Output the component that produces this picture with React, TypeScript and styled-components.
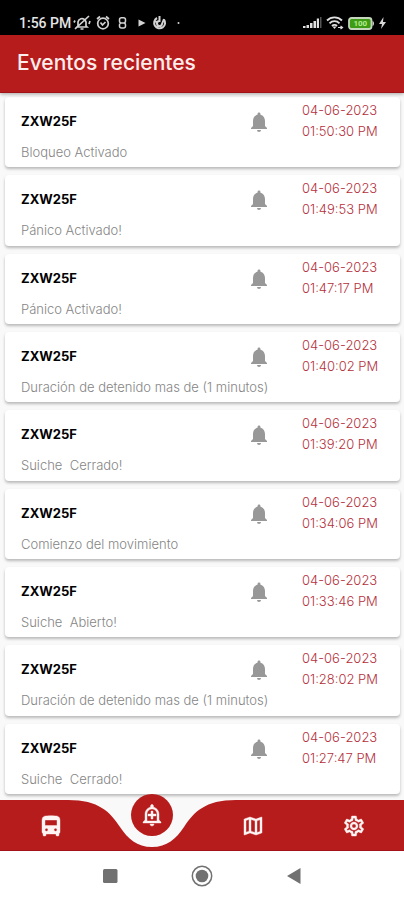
import React from "react";
import styled, { createGlobalStyle } from "styled-components";
import {
  MdNotifications,
  MdOutlineAddAlert,
  MdOutlineMap,
  MdOutlineSettings,
} from "react-icons/md";

const colors = {
  red: "#b71c1c",
  redDark: "#a31216",
  date: "#b4303c",
  page: "#f9f9f9",
  muted: "#858585",
  bell: "#989898",
  system: "#717171",
};

const GlobalStyle = createGlobalStyle`
  *, *::before, *::after { box-sizing: border-box; }
  body {
    margin: 0;
    background: ${colors.page};
    font-family: Inter, "Open Sans", sans-serif;
  }
`;

const Screen = styled.div`
  display: flex;
  flex-direction: column;
  min-height: 100vh;
`;

const StatusBar = styled.div`
  display: flex;
  align-items: center;
  justify-content: space-between;
  height: 35px;
  padding: 11px 18px 0 19px;
  background: #000;
  color: #e4e4e4;
  font: 500 14px/20px Roboto, sans-serif;
`;

const StatusGroup = styled.div<{ $gap: number }>`
  display: flex;
  align-items: center;
  gap: ${(p) => p.$gap}px;

  svg {
    display: block;
  }
`;

const Clock = styled.span`
  white-space: nowrap;
`;

const Header = styled.header`
  position: relative;
  z-index: 1;
  display: flex;
  align-items: center;
  height: 58px;
  padding: 0 17px 2px;
  background: ${colors.red};
  border-bottom: 1px solid ${colors.redDark};
  box-shadow: 0 1px 4px rgba(0, 0, 0, 0.35);
`;

const Title = styled.h1`
  margin: 0;
  color: #fdeeee;
  font-size: 21px;
  font-weight: 500;
  line-height: 30px;
`;

const EventList = styled.ul`
  display: flex;
  flex: 1;
  flex-direction: column;
  gap: 8px;
  margin: 0;
  padding: 4px 4px 6px 5px;
  list-style: none;
`;

const Card = styled.li`
  display: grid;
  flex: 1;
  grid-template-columns: minmax(0, 1fr) 20px 98px;
  column-gap: 33px;
  padding: 3px 0 0 16px;
  background: #fff;
  border-radius: 4px;
  box-shadow: 0 2px 3px rgba(0, 0, 0, 0.26);
`;

const Details = styled.div`
  padding-top: 11px;
  white-space: pre;
`;

const Plate = styled.h2`
  margin: 0;
  color: #000;
  font-size: 13px;
  font-weight: 700;
  line-height: 20px;
`;

const Description = styled.p`
  margin: 11px 0 0;
  color: ${colors.muted};
  font-size: 13px;
  font-weight: 300;
  line-height: 20px;
`;

const Bell = styled(MdNotifications)`
  justify-self: center;
  width: 24px;
  height: 24px;
  margin-top: 10px;
  color: ${colors.bell};
`;

const Stamp = styled.time`
  display: flex;
  flex-direction: column;
  color: ${colors.date};
  font-size: 13px;
  font-weight: 300;
  line-height: 21px;
  white-space: nowrap;
`;

const TabBar = styled.nav`
  position: relative;
  display: grid;
  grid-template-columns: repeat(4, 1fr);
  height: 51px;
`;

const TabShape = styled.svg`
  position: absolute;
  inset: 0;
  width: 100%;
  height: 100%;
`;

const Tab = styled.button<{ $active?: boolean }>`
  position: relative;
  display: flex;
  align-items: center;
  justify-content: center;
  justify-self: center;
  width: ${(p) => (p.$active ? "42px" : "100%")};
  height: ${(p) => (p.$active ? "42px" : "51px")};
  margin-top: ${(p) => (p.$active ? "-6px" : "0")};
  padding: 0;
  border: 0;
  border-radius: ${(p) => (p.$active ? "50%" : "0")};
  background: ${(p) => (p.$active ? colors.red : "transparent")};
  color: #fff4f4;

  svg {
    width: 24px;
    height: 24px;
  }

  path:not([fill="none"]) {
    stroke: currentColor;
    stroke-width: 0.4px;
  }
`;

const SystemBar = styled.div`
  display: flex;
  align-items: center;
  justify-content: center;
  gap: 68px;
  height: 49px;
  background: #fff;
`;

const SystemKey = styled.button`
  display: flex;
  align-items: center;
  justify-content: center;
  width: 24px;
  height: 24px;
  padding: 0;
  border: 0;
  background: transparent;
  color: ${colors.system};

  svg {
    flex: none;
  }
`;

const events = [
  ["Bloqueo Activado", "01:50:30 PM"],
  ["Pánico Activado!", "01:49:53 PM"],
  ["Pánico Activado!", "01:47:17 PM"],
  ["Duración de detenido mas de (1 minutos)", "01:40:02 PM"],
  ["Suiche  Cerrado!", "01:39:20 PM"],
  ["Comienzo del movimiento", "01:34:06 PM"],
  ["Suiche  Abierto!", "01:33:46 PM"],
  ["Duración de detenido mas de (1 minutos)", "01:28:02 PM"],
  ["Suiche  Cerrado!", "01:27:47 PM"],
].map(([description, time]) => ({
  plate: "ZXW25F",
  date: "04-06-2023",
  description,
  time,
}));

const NotificationIcons = () => (
  <svg width="110" height="16" viewBox="0 0 110 16" fill="none" stroke="#d2d2d2" strokeWidth="1.7">
    <path d="M5 11V7a4 4 0 0 1 7-2l1 2v4l1 1H4zM7.500 14h3M2 14 16 1M1 7.500l1-2M16 9l1-3" />
    <circle cx="30" cy="8.500" r="5.300" />
    <path d="m27.500 7.500 2 2.500 3-3M24 4l3-2.500M36 4l-3-2.500" />
    <path d="M48.500 2.800h2a2 2 0 0 1 2 2v1.200a2 2 0 0 1-2 2h-2a2 2 0 0 1-2-2V4.800a2 2 0 0 1 2-2zM48.500 8h2a2 2 0 0 1 2 2v1a2 2 0 0 1-2 2h-2a2 2 0 0 1-2-2v-1a2 2 0 0 1 2-2z" strokeWidth="1.500" />
    <path d="m65.500 4.500 7 3.500-7 3.500z" fill="#d2d2d2" stroke="none" />
    <path d="M84 3a5.500 5.500 0 1 0 7 1.500M86.500 1v5a2.500 2.500 0 1 0 2.500 3l2-5M83 6l2 6" strokeWidth="2" />
    <circle cx="105.500" cy="8" r="1" fill="#d2d2d2" stroke="none" />
  </svg>
);

const SignalIcon = () => (
  <svg width="19" height="12" viewBox="0 0 19 12" fill="#e0e0e0">
    <path d="M0 9h2.500v2H0zM3.500 8H6v3H3.500zM7 6h2.500v5H7zM10.500 4H13v7h-2.500zM13.800 1.500H16V11h-2.200z" />
    <path d="M17 0h1.500v11H17z" fill="#555" />
  </svg>
);

const WifiIcon = () => (
  <svg width="18" height="14" viewBox="0 0 18 14" fill="none" stroke="#e0e0e0" strokeWidth="1.800">
    <path d="M1 4.500a10.500 10.500 0 0 1 15 0M3.500 7.300a7 7 0 0 1 10 0M6 10a3.500 3.500 0 0 1 5 0" />
    <path d="m6.500 10.500 2 2.500 2-2.500z" fill="#e0e0e0" stroke="none" />
    <path d="M12 11.500h4M14.500 10l2 1.500-2 1.500" strokeWidth="1.200" />
  </svg>
);

const BatteryIcon = () => (
  <svg width="27" height="13" viewBox="0 0 27 13">
    <rect x="1" y="1" width="22.500" height="11" rx="2.500" fill="#3d9c13" stroke="#c5d6bd" strokeWidth="1.800" />
    <path d="M24.500 4c2 .5 2 4.500 0 5z" fill="#d5d5d5" />
    <text x="12.300" y="9.300" textAnchor="middle" fill="#b5ec94" fontFamily="Roboto, sans-serif" fontSize="8" fontWeight="700">100</text>
  </svg>
);

const ChargeIcon = () => (
  <svg width="7" height="12" viewBox="0 0 7 12" fill="#d8d8d8">
    <path d="M4.500 0 0 7h3L2 12l5-7H4z" />
  </svg>
);

const BusIcon = () => (
  <svg viewBox="0 0 24 24" fill="currentColor">
    <path
      fillRule="evenodd"
      d="M5.500 2.200C8 1.500 16 1.500 18.500 2.200Q21 3 21 6V18Q21 19 20 19.500V21Q20 22 19 22H18Q17 22 17 21V20H7V21Q7 22 6 22H5Q4 22 4 21V19.500Q3 19 3 18V6Q3 3 5.500 2.200ZM6 6V11.500H18V6ZM7.500 14.300A1.500 1.500 0 1 0 7.500 17.300A1.500 1.500 0 1 0 7.500 14.300ZM16.500 14.300A1.500 1.500 0 1 0 16.500 17.300A1.500 1.500 0 1 0 16.500 14.300Z"
    />
  </svg>
);

export default function App() {
  return (
    <>
      <GlobalStyle />
      <Screen>
        <StatusBar>
          <StatusGroup $gap={2}>
            <Clock>1:56 PM</Clock>
            <NotificationIcons />
          </StatusGroup>
          <StatusGroup $gap={4}>
            <SignalIcon />
            <WifiIcon />
            <BatteryIcon />
            <ChargeIcon />
          </StatusGroup>
        </StatusBar>
        <Header>
          <Title>Eventos recientes</Title>
        </Header>
        <EventList>
          {events.map((event) => (
            <Card key={event.time}>
              <Details>
                <Plate>{event.plate}</Plate>
                <Description>{event.description}</Description>
              </Details>
              <Bell aria-hidden />
              <Stamp>
                <span>{event.date}</span>
                <span>{event.time}</span>
              </Stamp>
            </Card>
          ))}
        </EventList>
        <TabBar aria-label="Principal">
          <TabShape viewBox="0 0 404 51" preserveAspectRatio="none" aria-hidden>
            <path
              d="M0 0H68C99 0 110 12 120 27C128 39 137 47 152 47S176 39 184 27C194 12 205 0 236 0H404V51H0Z"
              fill={colors.red}
            />
            <path d="M0 50H404V51H0Z" fill={colors.redDark} />
          </TabShape>
          <Tab type="button" aria-label="Vehículos">
            <BusIcon />
          </Tab>
          <Tab type="button" aria-label="Eventos" aria-current="page" $active>
            <MdOutlineAddAlert strokeWidth={0} />
          </Tab>
          <Tab type="button" aria-label="Mapa">
            <MdOutlineMap strokeWidth={0} />
          </Tab>
          <Tab type="button" aria-label="Ajustes">
            <MdOutlineSettings strokeWidth={0} />
          </Tab>
        </TabBar>
        <SystemBar>
          <SystemKey type="button" aria-label="Recientes">
            <svg width="16" height="16" viewBox="0 0 16 16">
              <rect x="1" y="1" width="14.500" height="14" rx="1.500" fill="currentColor" />
            </svg>
          </SystemKey>
          <SystemKey type="button" aria-label="Inicio">
            <svg width="22" height="22" viewBox="0 0 22 22">
              <circle cx="11" cy="11" r="9.700" fill="none" stroke="currentColor" strokeWidth="1.500" />
              <circle cx="11" cy="11" r="6.300" fill="currentColor" />
            </svg>
          </SystemKey>
          <SystemKey type="button" aria-label="Atrás">
            <svg width="16" height="18" viewBox="0 0 16 18">
              <path d="M14.500 1v16L1 9z" fill="currentColor" />
            </svg>
          </SystemKey>
        </SystemBar>
      </Screen>
    </>
  );
}
